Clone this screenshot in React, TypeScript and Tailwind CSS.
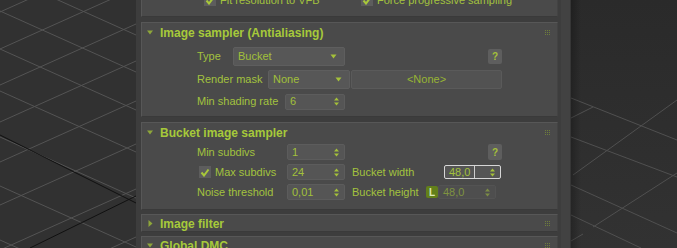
import type { ReactNode } from 'react'

const font = { fontFamily: '"Liberation Sans", Arial, sans-serif' }

function LeftGrid() {
  const b = [-26, 11, 49, 91, 137, 186, 240]
  const a = [12, 49, 85, 122, 162, 205, 250, 298, 350]
  return (
    <svg width="136" height="248" className="block shrink-0">
      <rect width="136" height="248" fill="#313131" />
      {b.map((v) => (
        <line key={'b' + v} x1="0" y1={v} x2="136" y2={v + 61} stroke="#545454" strokeWidth="1" />
      ))}
      {a.map((v) => (
        <line key={'a' + v} x1="0" y1={v} x2="136" y2={v - 61} stroke="#545454" strokeWidth="1" />
      ))}
      <line x1="0" y1="135" x2="136" y2="203" stroke="#111" strokeWidth="1" />
      <line x1="30" y1="248" x2="136" y2="196" stroke="#111" strokeWidth="1" />
    </svg>
  )
}

function RightGrid() {
  return (
    <svg width="106" height="248" className="block shrink-0">
      <defs>
        <linearGradient id="rg" x1="0" y1="0" x2="0" y2="1">
          <stop offset="0" stopColor="#2a2a2a" />
          <stop offset="1" stopColor="#323232" />
        </linearGradient>
        <linearGradient id="sh" x1="0" y1="0" x2="1" y2="0">
          <stop offset="0" stopColor="#000" stopOpacity="0.25" />
          <stop offset="1" stopColor="#000" stopOpacity="0" />
        </linearGradient>
      </defs>
      <rect width="106" height="248" fill="url(#rg)" />
      <g stroke="#505050" strokeWidth="1">
        <line x1="0" y1="98" x2="106" y2="140" />
        <line x1="0" y1="137" x2="106" y2="177" />
        <line x1="0" y1="185" x2="106" y2="233" />
        <line x1="0" y1="215" x2="70" y2="248" />
        <line x1="0" y1="118" x2="22" y2="107" />
        <line x1="2" y1="175" x2="106" y2="100" />
        <line x1="22" y1="227" x2="106" y2="173" />
        <line x1="0" y1="241" x2="12" y2="234" />
      </g>
      <rect width="10" height="248" fill="url(#sh)" />
    </svg>
  )
}

function Dots() {
  return (
    <svg width="7" height="7" className="block">
      {[0, 2, 4].map((y) =>
        [0, 2, 4].map((x) => <rect key={`${x}-${y}`} x={x + 1} y={y + 1} width="1" height="1" fill="#6e7d3c" />),
      )}
    </svg>
  )
}

function Header({ title, open = true }: { title: string; open?: boolean }) {
  return (
    <div className="flex h-[19px] items-center pl-[5px] pr-[6px]">
      <svg width="7" height="7" className="block">
        {open ? <polygon points="0,1.5 6,1.5 3,5.5" fill="#8ea63a" /> : <polygon points="1.5,0 5.5,3.5 1.5,7" fill="#8ea63a" />}
      </svg>
      <span className="ml-[6px] text-[12px] font-bold text-[#a6c93a]">{title}</span>
      <div className="ml-auto">
        <Dots />
      </div>
    </div>
  )
}

function Section({ className = '', children }: { className?: string; children: ReactNode }) {
  return (
    <div
      className={`shrink-0 overflow-hidden border-t border-l border-[#575757] border-r border-r-[#434343] border-b border-b-[#3a3a3a] bg-[#4a4a4a] ${className}`}
    >
      {children}
    </div>
  )
}

function Arrow() {
  return (
    <svg width="7" height="5" className="block">
      <polygon points="0.5,0.5 6.5,0.5 3.5,4.5" fill="#a4c03a" />
    </svg>
  )
}

function Drop({ w, value }: { w: string; value: string }) {
  return (
    <div className={`flex h-[19px] items-center rounded-[2px] border border-[#5e5e5e] bg-[#575757] pl-[4px] pr-[7px] ${w}`}>
      <span className="text-[11px] text-[#a2c03a]">{value}</span>
      <div className="ml-auto">
        <Arrow />
      </div>
    </div>
  )
}

function UpDown({ dim = false }: { dim?: boolean }) {
  const c = dim ? '#7c8c45' : '#a4c03a'
  return (
    <svg width="5" height="9" className="block">
      <polygon points="0,3.5 5,3.5 2.5,0.5" fill={c} />
      <polygon points="0,5.5 5,5.5 2.5,8.5" fill={c} />
    </svg>
  )
}

function Spin({
  w,
  h = 'h-[16px]',
  value,
  focus = false,
  dim = false,
}: {
  w: string
  h?: string
  value: string
  focus?: boolean
  dim?: boolean
}) {
  return (
    <div
      className={`flex items-center rounded-[2px] border pl-[4px] pr-[5px] ${w} ${h} ${
        focus ? 'border-[#d6d6d6] bg-[#555555]' : dim ? 'border-[#535353] bg-[#4e4e4e]' : 'border-[#5c5c5c] bg-[#555555]'
      }`}
    >
      <span className={`text-[11px] ${dim ? 'text-[#7f9340]' : 'text-[#a2c03a]'}`}>{value}</span>
      {focus && <div className="ml-[4px] h-[12px] w-px bg-[#cfcfcf]" />}
      <div className="ml-auto">
        <UpDown dim={dim} />
      </div>
    </div>
  )
}

function Help({ className = '' }: { className?: string }) {
  return (
    <div className={`flex h-[15px] w-[14px] items-center justify-center rounded-[2px] bg-[#5e5e5e] text-[10px] font-bold text-[#a4c03a] ${className}`}>
      ?
    </div>
  )
}

function Check({ on = true }: { on?: boolean }) {
  return (
    <div className="flex h-[12px] w-[12px] items-center justify-center bg-[#5d5d5d]">
      {on && (
        <svg width="10" height="9" className="block">
          <polyline points="1.5,4.5 4,7.5 8.5,1.5" fill="none" stroke="#a8c83a" strokeWidth="2" />
        </svg>
      )}
    </div>
  )
}

const label = 'text-[11px] text-[#a3c23e]'

export default function App() {
  return (
    <div className="flex h-[248px] w-[677px] overflow-hidden bg-[#2f2f2f]" style={font}>
      <LeftGrid />
      <div className="flex h-[248px] w-[435px] shrink-0 bg-[#3d3d3d]">
        <div className="ml-[5px] flex w-[417px] flex-col">
          <Section className="-mt-[20px] h-[37px] pt-[11px]">
            <div className="flex h-[16px] items-center pl-[62px]">
              <Check />
              <span className={`ml-[4px] w-[141px] ${label}`}>Fit resolution to VFB</span>
              <Check />
              <span className={`ml-[4px] ${label}`}>Force progressive sampling</span>
            </div>
          </Section>

          <Section className="mt-[5px] h-[95px]">
            <Header title="Image sampler (Antialiasing)" />
            <div className="flex flex-col pt-[5px] pl-[55px]">
              <div className="flex h-[19px] items-center">
                <span className={`w-[36px] ${label}`}>Type</span>
                <Drop w="w-[112px]" value="Bucket" />
                <Help className="ml-[143px]" />
              </div>
              <div className="mt-[4px] flex h-[19px] items-center">
                <span className={`w-[71px] ${label}`}>Render mask</span>
                <Drop w="w-[82px]" value="None" />
                <div className="ml-[1px] flex h-[19px] w-[151px] items-center justify-center rounded-[2px] border border-[#5a5a5a] bg-[#525252] text-[11px] text-[#98b534]">
                  &lt;None&gt;
                </div>
              </div>
              <div className="mt-[4px] flex h-[17px] items-center">
                <span className={`w-[88px] ${label}`}>Min shading rate</span>
                <Spin w="w-[60px]" value="6" />
              </div>
            </div>
          </Section>

          <Section className="mt-[5px] h-[88px]">
            <Header title="Bucket image sampler" />
            <div className="flex flex-col pl-[55px]">
              <div className="flex h-[20px] items-center">
                <span className={`w-[90px] ${label}`}>Min subdivs</span>
                <Spin w="w-[58px]" value="1" />
                <Help className="ml-[143px] h-[16px]" />
              </div>
              <div className="flex h-[20px] items-center">
                <div className="ml-[2px]">
                  <Check />
                </div>
                <span className={`ml-[4px] w-[72px] ${label}`}>Max subdivs</span>
                <Spin w="w-[58px]" value="24" />
                <span className={`ml-[7px] w-[92px] ${label}`}>Bucket width</span>
                <Spin w="w-[57px]" h="h-[14px]" value="48,0" focus />
              </div>
              <div className="flex h-[20px] items-center">
                <span className={`w-[90px] ${label}`}>Noise threshold</span>
                <Spin w="w-[58px]" value="0,01" />
                <span className={`ml-[7px] w-[74px] ${label}`}>Bucket height</span>
                <div className="flex h-[12px] w-[12px] items-center justify-center rounded-[2px] bg-[#62801a] text-[10px] font-bold text-[#dbe8b8]">
                  L
                </div>
                <Spin w="w-[58px]" h="h-[14px]" value="48,0" dim />
              </div>
            </div>
          </Section>

          <Section className="mt-[4px] h-[18px]">
            <div className="-mt-px">
              <Header title="Image filter" open={false} />
            </div>
          </Section>

          <Section className="mt-[4px] h-[30px]">
            <div className="-mt-[1px]">
              <Header title="Global DMC" />
            </div>
          </Section>
        </div>
        <div className="ml-[3px] h-[248px] w-[10px] border-r border-[#363636] bg-[#424242]" />
      </div>
      <RightGrid />
    </div>
  )
}
